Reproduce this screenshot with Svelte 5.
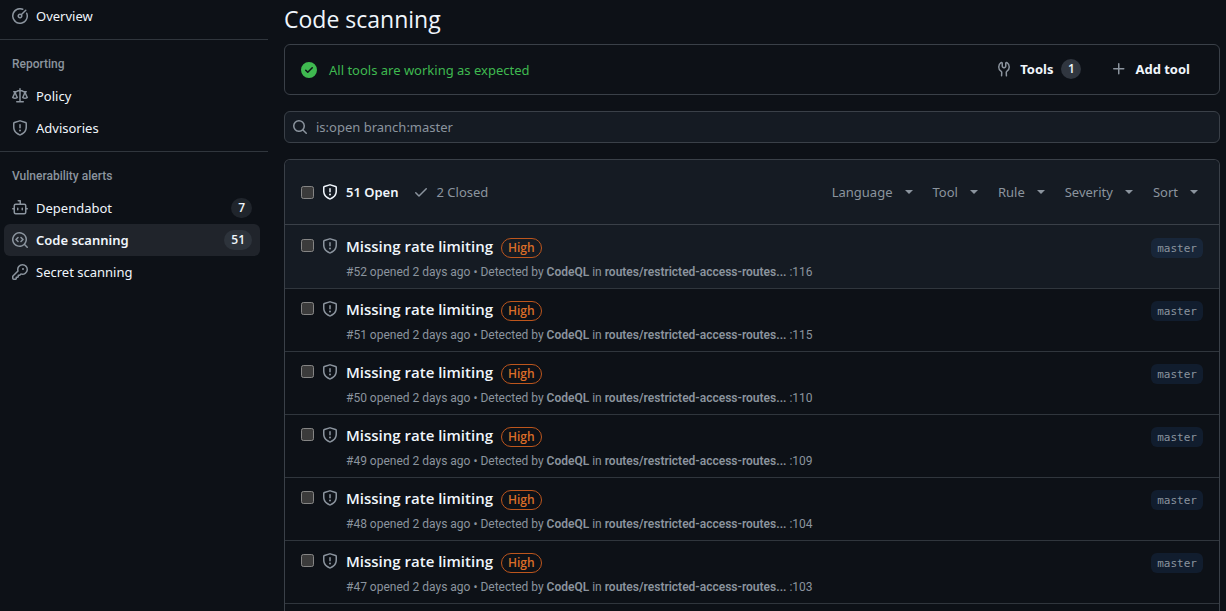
<script>
  const icons = {
    meter: 'M8 1.5a6.5 6.5 0 1 0 6.016 4.035.75.75 0 0 1 1.388-.57 8 8 0 1 1-4.37-4.37.75.75 0 1 1-.569 1.389A6.473 6.473 0 0 0 8 1.5Zm6.28.22a.75.75 0 0 1 0 1.06l-4.063 4.064a2.5 2.5 0 1 1-1.06-1.06L13.22 1.72a.75.75 0 0 1 1.06 0ZM7 8a1 1 0 1 0 2 0 1 1 0 0 0-2 0Z',
    law: 'M8.75.75V2h.985c.304 0 .603.08.867.231l1.29.736c.038.022.08.033.124.033h2.234a.75.75 0 0 1 0 1.5h-.427l2.111 4.692a.75.75 0 0 1-.154.838l-.53-.53.529.531-.001.002-.002.002-.006.006-.006.005-.01.01-.045.04c-.21.176-.441.327-.686.45C14.556 10.78 13.88 11 13 11a4.498 4.498 0 0 1-2.023-.454 3.544 3.544 0 0 1-.686-.45l-.045-.04-.016-.015-.006-.006-.004-.004v-.001a.75.75 0 0 1-.154-.838L12.178 4.5h-.162c-.305 0-.604-.079-.868-.231l-1.29-.736a.245.245 0 0 0-.124-.033H8.75V13h2.5a.75.75 0 0 1 0 1.5h-6.5a.75.75 0 0 1 0-1.5h2.5V3.5h-.984a.245.245 0 0 0-.124.033l-1.289.737c-.265.15-.564.23-.869.23h-.162l2.112 4.692a.75.75 0 0 1-.154.838l-.53-.53.529.531-.001.002-.002.002-.006.006-.016.015-.045.04c-.21.176-.441.327-.686.45C4.556 10.78 3.88 11 3 11a4.498 4.498 0 0 1-2.023-.454 3.544 3.544 0 0 1-.686-.45l-.045-.04-.016-.015-.006-.006-.004-.004v-.001a.75.75 0 0 1-.154-.838L2.178 4.5H1.75a.75.75 0 0 1 0-1.5h2.234a.249.249 0 0 0 .125-.033l1.288-.737c.265-.15.564-.23.869-.23h.984V.75a.75.75 0 0 1 1.5 0Zm2.945 8.477c.285.135.718.273 1.305.273s1.02-.138 1.305-.273L13 6.327Zm-10 0c.285.135.718.273 1.305.273s1.02-.138 1.305-.273L3 6.327Z',
    shield: 'M7.467.133a1.748 1.748 0 0 1 1.066 0l5.25 1.68A1.75 1.75 0 0 1 15 3.48V7c0 1.566-.32 3.182-1.303 4.682-.983 1.498-2.585 2.813-5.032 3.855a1.697 1.697 0 0 1-1.33 0c-2.447-1.042-4.049-2.357-5.032-3.855C1.32 10.182 1 8.566 1 7V3.48a1.75 1.75 0 0 1 1.217-1.667Zm.61 1.429a.25.25 0 0 0-.153 0l-5.25 1.68a.25.25 0 0 0-.174.238V7c0 1.358.275 2.666 1.057 3.86.784 1.194 2.121 2.34 4.366 3.297a.196.196 0 0 0 .154 0c2.245-.956 3.582-2.104 4.366-3.298C13.225 9.666 13.5 8.36 13.5 7V3.48a.251.251 0 0 0-.174-.237l-5.25-1.68ZM8.75 4.75v3a.75.75 0 0 1-1.5 0v-3a.75.75 0 0 1 1.5 0ZM9 10.5a1 1 0 1 1-2 0 1 1 0 0 1 2 0Z',
    dependabot: 'M5.75 7.5a.75.75 0 0 1 .75.75v1.5a.75.75 0 0 1-1.5 0v-1.5a.75.75 0 0 1 .75-.75Zm5.25.75a.75.75 0 0 0-1.5 0v1.5a.75.75 0 0 0 1.5 0v-1.5Z M6.25 0h2A.75.75 0 0 1 9 .75V3.5h3.25a2.25 2.25 0 0 1 2.25 2.25V8h.75a.75.75 0 0 1 0 1.5h-.75v2.75a2.25 2.25 0 0 1-2.25 2.25h-8.5a2.25 2.25 0 0 1-2.25-2.25V9.5H.75a.75.75 0 0 1 0-1.5h.75V5.75A2.25 2.25 0 0 1 3.75 3.5H7.5v-2H6.25a.75.75 0 0 1 0-1.5ZM3 5.75v6.5c0 .414.336.75.75.75h8.5a.75.75 0 0 0 .75-.75v-6.5a.75.75 0 0 0-.75-.75h-8.5a.75.75 0 0 0-.75.75Z',
    codescan: 'M8.47 4.97a.75.75 0 0 0 0 1.06L9.94 7.5 8.47 8.97a.75.75 0 1 0 1.06 1.06l2-2a.75.75 0 0 0 0-1.06l-2-2a.75.75 0 0 0-1.06 0ZM6.53 6.03a.75.75 0 0 0-1.06-1.06l-2 2a.75.75 0 0 0 0 1.06l2 2a.75.75 0 1 0 1.06-1.06L5.06 7.5l1.47-1.47Z M12.246 13.307a7.501 7.501 0 1 1 1.06-1.06l2.474 2.473a.749.749 0 0 1-.326 1.275.749.749 0 0 1-.734-.215ZM1.5 7.5a6.002 6.002 0 0 0 3.608 5.504 6.002 6.002 0 0 0 6.486-1.117.748.748 0 0 1 .292-.293A6 6 0 1 0 1.5 7.5Z',
    key: 'M10.5 0a5.499 5.499 0 1 1-1.288 10.848l-.932.932a.749.749 0 0 1-.53.22H7v.75a.749.749 0 0 1-.22.53l-.5.5a.749.749 0 0 1-.53.22H5v.75a.749.749 0 0 1-.22.53l-.5.5a.749.749 0 0 1-.53.22h-2A1.75 1.75 0 0 1 0 14.25v-2c0-.199.079-.389.22-.53l4.932-4.932A5.5 5.5 0 0 1 10.5 0Zm-4 5.5c-.001.431.069.86.205 1.269a.75.75 0 0 1-.181.768L1.5 12.56v1.69c0 .138.112.25.25.25h1.69l.06-.06v-1.19a.75.75 0 0 1 .75-.75h1.19l.06-.06v-1.19a.75.75 0 0 1 .75-.75h1.19l1.023-1.025a.75.75 0 0 1 .768-.18A4 4 0 1 0 6.5 5.5ZM11 6a1 1 0 1 1 0-2 1 1 0 0 1 0 2Z',
    tools: 'M5.433 2.304A4.492 4.492 0 0 0 3.5 6c0 1.598.832 3.002 2.09 3.802.518.328.929.923.902 1.64v.008l-.164 3.337a.75.75 0 1 1-1.498-.073l.163-3.33c.002-.085-.05-.216-.207-.316A5.996 5.996 0 0 1 2 6a5.993 5.993 0 0 1 2.567-4.92 1.482 1.482 0 0 1 1.673-.04c.462.296.76.827.76 1.423v2.82c0 .082.041.16.11.206l.75.51a.25.25 0 0 0 .28 0l.75-.51A.249.249 0 0 0 9 5.282V2.463c0-.596.298-1.127.76-1.423a1.482 1.482 0 0 1 1.673.04A5.993 5.993 0 0 1 14 6a5.996 5.996 0 0 1-2.786 5.068c-.157.1-.209.23-.207.315l.163 3.33a.752.752 0 0 1-1.094.714.75.75 0 0 1-.404-.64l-.164-3.345c-.027-.717.384-1.312.902-1.64A4.495 4.495 0 0 0 12.5 6a4.492 4.492 0 0 0-1.933-3.696c-.024.017-.067.067-.067.16v2.818a1.75 1.75 0 0 1-.767 1.448l-.75.51a1.75 1.75 0 0 1-1.966 0l-.75-.51A1.75 1.75 0 0 1 5.5 5.282V2.463c0-.092-.043-.142-.067-.159Z',
    plus: 'M7.75 2a.75.75 0 0 1 .75.75V7h4.25a.75.75 0 0 1 0 1.5H8.5v4.25a.75.75 0 0 1-1.5 0V8.5H2.75a.75.75 0 0 1 0-1.5H7V2.75A.75.75 0 0 1 7.75 2Z',
    check: 'M13.78 4.22a.75.75 0 0 1 0 1.06l-7.25 7.25a.75.75 0 0 1-1.06 0L2.22 9.28a.751.751 0 0 1 .018-1.042.751.751 0 0 1 1.042-.018L6 10.94l6.72-6.72a.75.75 0 0 1 1.06 0Z',
    checkFill: 'M8 16A8 8 0 1 1 8 0a8 8 0 0 1 0 16Zm3.78-9.72a.751.751 0 0 0-.018-1.042.751.751 0 0 0-1.042-.018L6.75 9.19 5.28 7.72a.751.751 0 0 0-1.042.018.751.751 0 0 0-.018 1.042l2 2a.75.75 0 0 0 1.06 0Z',
    search: 'M10.68 11.74a6 6 0 0 1-7.922-8.982 6 6 0 0 1 8.982 7.922l3.04 3.04a.749.749 0 0 1-.326 1.275.749.749 0 0 1-.734-.215ZM11.5 7a4.499 4.499 0 1 0-8.997 0A4.499 4.499 0 0 0 11.5 7Z'
  };

  const groups = [
    { items: [{ icon: 'meter', label: 'Overview' }] },
    {
      title: 'Reporting',
      items: [
        { icon: 'law', label: 'Policy' },
        { icon: 'shield', label: 'Advisories' }
      ]
    },
    {
      title: 'Vulnerability alerts',
      items: [
        { icon: 'dependabot', label: 'Dependabot', count: 7 },
        { icon: 'codescan', label: 'Code scanning', count: 51, current: true },
        { icon: 'key', label: 'Secret scanning' }
      ]
    }
  ];

  const filters = ['Language', 'Tool', 'Rule', 'Severity', 'Sort'];

  const alerts = [
    { id: 52, line: 116 },
    { id: 51, line: 115 },
    { id: 50, line: 110 },
    { id: 49, line: 109 },
    { id: 48, line: 104 },
    { id: 47, line: 103 }
  ];

  let query = $state('is:open branch:master');
</script>

{#snippet icon(name)}
  <svg class="icon" viewBox="0 0 16 16" width="16" height="16" aria-hidden="true">
    <path fill-rule="evenodd" d={icons[name]} />
  </svg>
{/snippet}

<div class="page">
  <nav class="sidebar">
    {#each groups as group}
      <section class="group">
        {#if group.title}<h2 class="group-title">{group.title}</h2>{/if}
        {#each group.items as item}
          <a class="nav-item" class:current={item.current} href="#nav">
            {@render icon(item.icon)}
            <span class="nav-label">{item.label}</span>
            {#if item.count}<span class="count">{item.count}</span>{/if}
          </a>
        {/each}
      </section>
    {/each}
  </nav>

  <main class="main">
    <h1 class="title">Code scanning</h1>

    <div class="status">
      <span class="status-icon">{@render icon('checkFill')}</span>
      <a class="status-text" href="#status">All tools are working as expected</a>
      <div class="actions">
        <button class="action" type="button">
          {@render icon('tools')}
          <span>Tools</span>
          <span class="count strong">1</span>
        </button>
        <button class="action" type="button">
          {@render icon('plus')}
          <span>Add tool</span>
        </button>
      </div>
    </div>

    <label class="search">
      {@render icon('search')}
      <input type="text" aria-label="Search alerts" bind:value={query} />
    </label>

    <div class="list">
      <div class="list-head">
        <input class="tick" type="checkbox" aria-label="Select all alerts" />
        <a class="state open" href="#open">{@render icon('shield')}<span>51 Open</span></a>
        <a class="state closed" href="#closed">{@render icon('check')}<span>2 Closed</span></a>
        <div class="filters">
          {#each filters as filter}
            <button class="filter" type="button">{filter}<span class="caret"></span></button>
          {/each}
        </div>
      </div>

      {#each alerts as alert}
        <div class="row">
          <input class="tick" type="checkbox" aria-label="Select alert {alert.id}" />
          <span class="row-icon">{@render icon('shield')}</span>
          <div class="row-body">
            <div class="row-top">
              <a class="row-title" href="#alert">Missing rate limiting</a>
              <span class="severity">High</span>
            </div>
            <div class="meta">
              #{alert.id} opened 2 days ago • Detected by <b>CodeQL</b> in <b>routes/restricted-access-routes...</b> :{alert.line}
            </div>
          </div>
          <a class="branch" href="#branch">master</a>
        </div>
      {/each}
    </div>
  </main>
</div>

<style>
  :global(body) {
    background: #0d1117;
    color-scheme: dark;
  }

  .page {
    display: flex;
    height: 100vh;
    overflow: hidden;
    box-sizing: border-box;
    padding-right: 6px;
    gap: 16px;
    color: #f0f6fc;
    font: 13px/20px 'Noto Sans', 'Open Sans', sans-serif;
  }

  a {
    color: inherit;
    text-decoration: none;
  }

  button {
    border: 0;
    padding: 0;
    background: none;
    color: inherit;
    font: inherit;
  }

  .icon {
    flex: none;
    display: block;
    fill: currentColor;
  }

  .sidebar {
    flex: 0 0 268px;
  }

  .group + .group {
    margin-top: 7px;
    padding-top: 8px;
    border-top: 1px solid #30363d;
  }

  .group-title {
    margin: 0;
    padding: 0 12px;
    color: #8b949e;
    font-family: Roboto, sans-serif;
    font-size: 12px;
    font-weight: 500;
    line-height: 32px;
  }

  .nav-item {
    display: flex;
    align-items: center;
    gap: 8px;
    height: 32px;
    margin: 0 8px 0 4px;
    padding: 0 8px;
    border-radius: 6px;
  }

  .nav-item .icon {
    color: #8b949e;
  }

  .nav-label {
    flex: 1;
  }

  .current {
    background: #20242b;
    font-weight: 600;
  }

  .count {
    min-width: 20px;
    padding: 0 7px;
    box-sizing: border-box;
    border-radius: 10px;
    background: #20252c;
    font-family: 'Open Sans', sans-serif;
    font-size: 12px;
    font-weight: 600;
    line-height: 20px;
    text-align: center;
  }

  .current .count {
    background: #2d333b;
  }

  .count.strong {
    padding: 0 6px;
    background: #30363f;
  }

  .main {
    flex: 1;
    min-width: 0;
    display: flex;
    flex-direction: column;
    gap: 16px;
  }

  .title {
    margin: 3px 0 -7px;
    font-family: 'Open Sans', sans-serif;
    font-size: 23px;
    font-weight: 400;
    line-height: 32px;
  }

  .status {
    display: flex;
    align-items: center;
    padding: 8px 29px 8px 16px;
    min-height: 33px;
    border: 1px solid #3a4048;
    border-radius: 6px;
  }

  .status-icon {
    color: #3fb950;
  }

  .status-text {
    flex: 1;
    margin-left: 12px;
    color: #3fb950;
  }

  .actions {
    display: flex;
    gap: 30px;
    padding-bottom: 2px;
  }

  .action {
    display: flex;
    align-items: center;
    gap: 8px;
    font-weight: 700;
  }

  .action .icon {
    color: #8b949e;
  }

  .search {
    display: flex;
    align-items: center;
    gap: 8px;
    height: 30px;
    padding: 0 7px;
    border: 1px solid #3a4048;
    border-radius: 6px;
    background: #151b23;
    color: #8b949e;
  }

  .search input {
    flex: 1;
    min-width: 0;
    padding: 0;
    border: 0;
    outline: 0;
    background: none;
    color: #8b949e;
    font: inherit;
  }

  .list {
    flex: 1;
    border: solid #3a4048;
    border-width: 1px 1px 0;
    border-radius: 6px 6px 0 0;
    overflow: hidden;
  }

  .list-head {
    display: flex;
    align-items: center;
    height: 64px;
    padding: 0 21px 0 16px;
    border-bottom: 1px solid #3a4048;
    background: #151b23;
  }

  .tick {
    flex: none;
    width: 13px;
    height: 13px;
    margin: 0;
  }

  .state {
    display: flex;
    align-items: center;
    gap: 8px;
  }

  .open {
    margin-left: 8px;
    font-weight: 600;
  }

  .closed {
    margin-left: 14px;
    color: #8b949e;
  }

  .filters {
    display: flex;
    gap: 20px;
    margin-left: auto;
    color: #8b949e;
  }

  .filter {
    display: flex;
    align-items: center;
    gap: 12px;
  }

  .caret {
    border: 4px solid transparent;
    border-top-color: currentColor;
    border-bottom-width: 0;
  }

  .row {
    display: flex;
    align-items: flex-start;
    height: 62px;
    padding: 0 16px;
    border-bottom: 1px solid #30363d;
  }

  .list-head + .row {
    padding-top: 1px;
    background: #151b23;
  }

  .row .tick {
    margin-top: 13px;
  }

  .row-icon {
    margin: 12px 0 0 8px;
    color: #8b949e;
  }

  .row-body {
    flex: 1;
    min-width: 0;
    margin: 8px 0 0 8px;
  }

  .row-top {
    display: flex;
    align-items: flex-start;
    gap: 8px;
    height: 26px;
  }

  .row-title {
    font-family: 'Open Sans', sans-serif;
    font-size: 15px;
    font-weight: 600;
    line-height: 24px;
  }

  .severity {
    margin-top: 4px;
    padding: 0 6px;
    border: 1px solid #bd561d;
    border-radius: 10px;
    color: #db6d28;
    font-family: 'Open Sans', sans-serif;
    font-size: 12px;
    font-weight: 600;
    line-height: 18px;
  }

  .meta {
    color: #8b949e;
    font-family: Roboto, sans-serif;
    font-size: 12px;
    line-height: 24px;
    white-space: nowrap;
  }

  .meta b {
    font-weight: 600;
  }

  .branch {
    height: 20px;
    margin-top: 12px;
    padding: 0 6px;
    border-radius: 6px;
    background: rgba(56, 139, 253, 0.1);
    color: #8b949e;
    font: 11px/22px 'DejaVu Sans Mono', monospace;
  }
</style>
